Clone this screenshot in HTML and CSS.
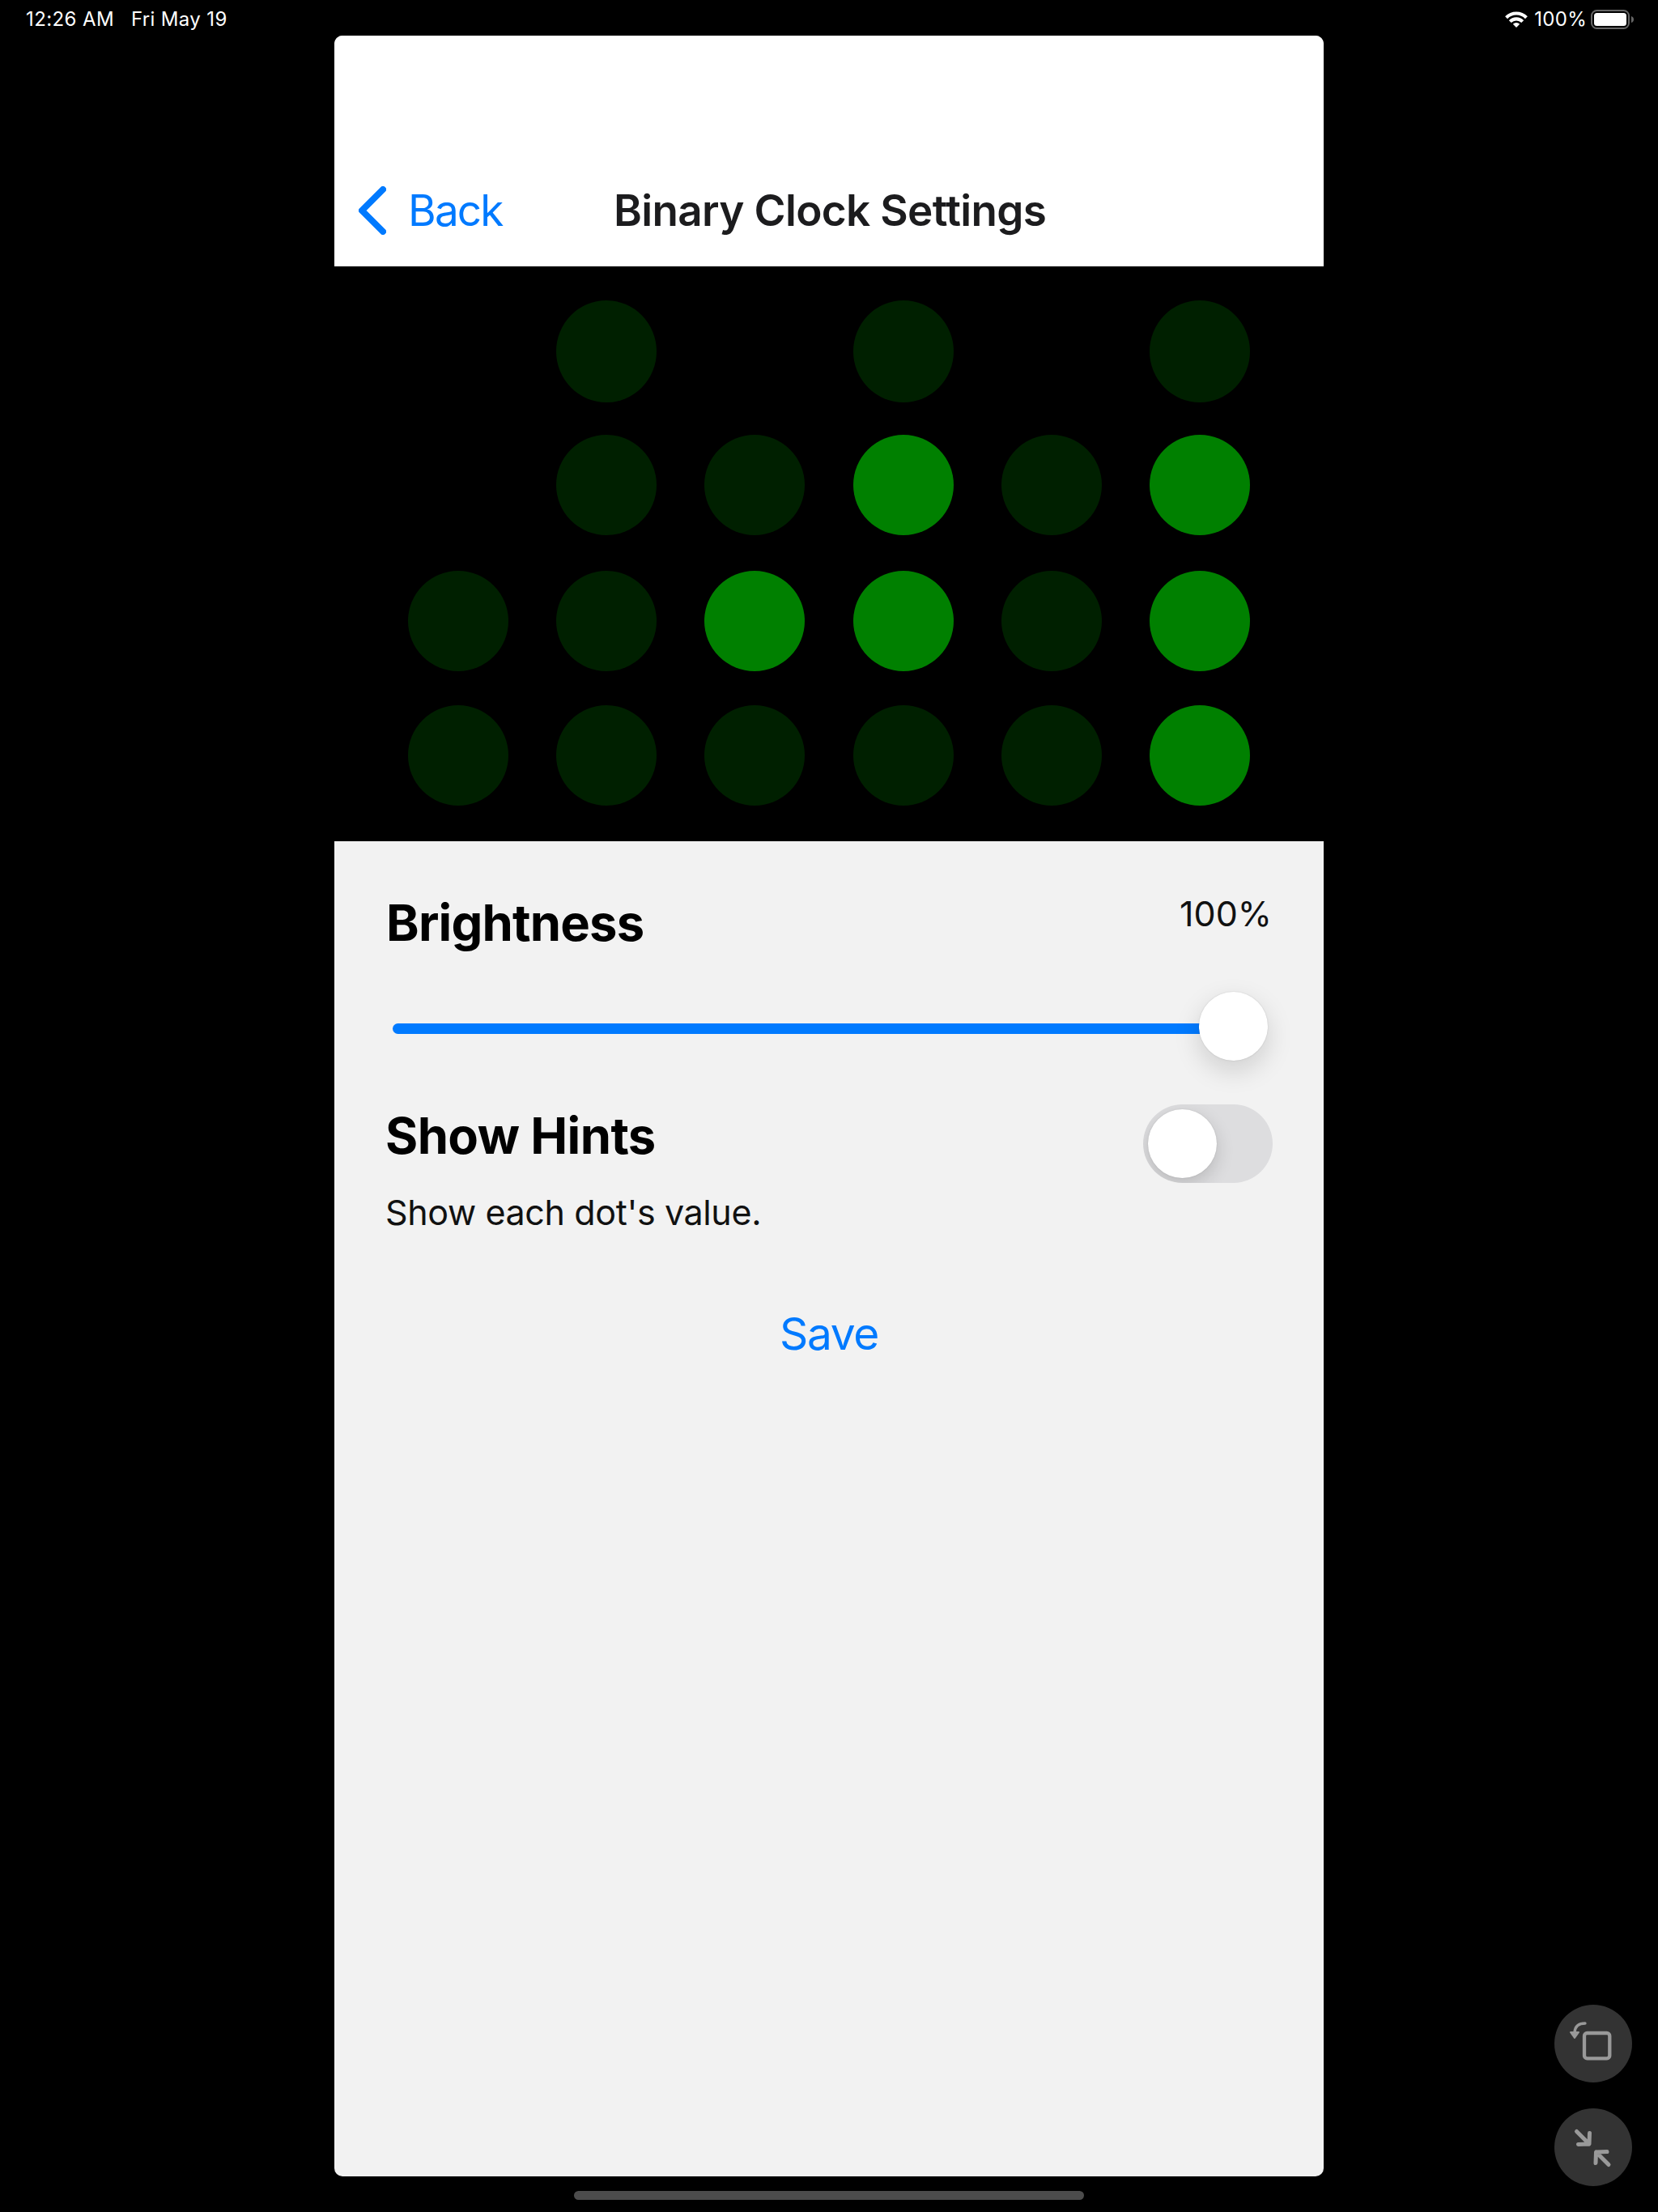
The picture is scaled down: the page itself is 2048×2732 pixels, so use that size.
FILE: index.html
```html
<!DOCTYPE html>
<html lang="en">
<head>
<meta charset="utf-8">
<title>Binary Clock Settings</title>
<link rel="stylesheet" href="styles.css">
</head>
<body>
<header class="status-bar">
  <div class="status-group"><span class="status-time">12:26 AM</span><span class="status-date">Fri May 19</span></div>
  <div class="status-group status-right">
    <svg class="wifi" viewBox="0 0 28 20" width="28" height="20"><g fill="none" stroke="#fff" stroke-width="4.1"><path d="M1.600 7.800a17.300 17.300 0 0 1 24.800 0"/><path d="M6.300 12.600a10.700 10.700 0 0 1 15.400 0"/></g><path fill="#fff" d="M14 20l-4.200-4.200a6 6 0 0 1 8.400 0z"/></svg>
    <span class="status-battery">100%</span>
    <svg class="battery" viewBox="0 0 54 24" width="54" height="24"><rect x="1" y="1" width="46" height="22" rx="6.5" fill="none" stroke="#666" stroke-width="2"/><rect x="4" y="4" width="40" height="16" rx="3.5" fill="#fff"/><path d="M50 8v8q3-1 3-4t-3-4z" fill="#666"/></svg>
  </div>
</header>
<main class="app">
  <nav class="nav-bar">
    <button class="back"><svg class="chevron" viewBox="0 0 34 60" width="34" height="60"><path d="M30 4L4 30l26 26" fill="none" stroke="#007aff" stroke-width="8" stroke-linecap="round" stroke-linejoin="round"/></svg><span class="back-label">Back</span></button>
    <h1 class="title">Binary Clock Settings</h1>
  </nav>
  <section class="clock">
    <i></i><i class="dot"></i><i></i><i class="dot"></i><i></i><i class="dot"></i>
    <i></i><i class="dot"></i><i class="dot"></i><i class="dot on"></i><i class="dot"></i><i class="dot on"></i>
    <i class="dot"></i><i class="dot"></i><i class="dot on"></i><i class="dot on"></i><i class="dot"></i><i class="dot on"></i>
    <i class="dot"></i><i class="dot"></i><i class="dot"></i><i class="dot"></i><i class="dot"></i><i class="dot on"></i>
  </section>
  <section class="settings">
    <div class="row"><h2 class="brightness">Brightness</h2><span class="value">100%</span></div>
    <div class="slider"><div class="track"></div><div class="thumb"></div></div>
    <div class="row hints"><div><h2>Show Hints</h2><p>Show each dot's value.</p></div><div class="toggle"><div class="knob"></div></div></div>
    <button class="save">Save</button>
  </section>
</main>
<footer class="home-area"><div class="home-indicator"></div></footer>
<div class="float-buttons">
  <button class="float-button"><svg viewBox="0 0 96 96" width="96" height="96"><rect x="37" y="35" width="31.300" height="31.300" rx="3.500" fill="none" stroke="#999" stroke-width="4.300"/><path d="M38 23c-8 0-12.500 3-13 11" fill="none" stroke="#999" stroke-width="3.300" stroke-linecap="round"/><path d="M20 34h10l-5 7z" fill="#999" stroke="#999" stroke-width="2" stroke-linejoin="round"/></svg></button>
  <button class="float-button"><svg viewBox="0 0 96 96" width="96" height="96"><g fill="none" stroke="#999" stroke-width="5" stroke-linecap="round" stroke-linejoin="round"><path d="M27.500 28.500L43 44M43.500 30.500L43 44L29.500 44.500"/><path d="M67 69.500L51.500 54M65 53.500L51.500 54L51 67.500"/></g></svg></button>
</div>
</body>
</html>
```
FILE: styles.css
```css
* { box-sizing: border-box; margin: 0; padding: 0; }
body {
  width: 2048px; height: 2732px; background: #000; color: #000;
  font-family: Inter, "Liberation Sans", sans-serif;
  display: flex; flex-direction: column; align-items: center; overflow: hidden;
}
button { border: 0; background: none; font: inherit; color: #007aff; }
svg { display: block; }
.status-bar { width: 100%; height: 44px; padding: 10px 29px 0 32px; display: flex; justify-content: space-between; color: #fff; font-size: 24px; line-height: 28px; font-weight: 400; }
.status-group { display: flex; }
.status-time { width: 130px; letter-spacing: .4px; }
.status-date { letter-spacing: .35px; }
.status-battery { letter-spacing: .3px; }
.wifi { margin: 4px 8px 0 0; }
.battery { margin: 2px 0 0 5px; }
.app { width: 1222px; height: 2644px; border-radius: 10px; overflow: hidden; background: #f2f2f2; display: flex; flex-direction: column; }
.nav-bar { height: 285px; padding: 184px 30px 0; background: #fff; display: grid; grid-template-columns: 315px 1fr; align-items: start; font-size: 53px; line-height: 64px; }
.back { display: flex; gap: 27px; letter-spacing: -1.8px; }
.chevron { margin-top: 2px; }
.title { font-size: 53px; font-weight: 600; color: #1c1c1e; white-space: nowrap; letter-spacing: -.65px; }
.clock { height: 710px; padding: 42px 91px 0; background: #000; display: grid; grid-template-columns: repeat(6, 124px); grid-template-rows: 126px 128px 126px 124px; column-gap: 59.2px; row-gap: 40px; }
.dot { height: 124px; border-radius: 50%; background: #002000; }
.dot:nth-child(-n+6) { height: 126px; }
.dot.on { background: #008000; }
.settings { flex: 1; padding: 63px; }
.row { display: flex; justify-content: space-between; }
h2 { font-size: 61.5px; line-height: 74px; font-weight: 700; letter-spacing: -.6px; }
.brightness { padding: 1px 0 0 1px; letter-spacing: -.8px; }
.value, p { font-size: 43px; line-height: 52px; color: #111; }
.value { padding-right: 1px; }
.slider { height: 85px; margin: 48px 6px 0 9px; display: flex; align-items: center; }
.track { flex: 1; height: 13px; margin: 5px -8px 0 0; border-radius: 6.5px 0 0 6.5px; background: #007aff; }
.thumb { width: 85px; height: 85px; border-radius: 50%; background: #fff; box-shadow: 0 12px 32px rgba(0,0,0,.15), 0 0 2px rgba(0,0,0,.15); }
.hints { margin-top: 54px; }
.hints h2 { margin-top: 2px; }
.hints p { margin-top: 31px; letter-spacing: -.37px; }
.toggle { width: 160px; height: 97px; border-radius: 49px; padding: 6px; background: #dddddf; overflow: hidden; }
.knob { width: 85px; height: 85px; border-radius: 50%; background: #fff; box-shadow: 0 8px 22px rgba(0,0,0,.16), 0 0 2px rgba(0,0,0,.12); }
.save { display: block; margin: 92px auto 0; font-size: 55px; line-height: 64px; letter-spacing: -1.3px; }
.home-area { height: 44px; padding-top: 18px; }
.home-indicator { width: 630px; height: 11px; border-radius: 5.5px; background: #4c4c4c; }
.float-buttons { position: absolute; right: 32px; bottom: 32px; display: grid; gap: 32px; }
.float-button { width: 96px; height: 96px; border-radius: 50%; background: #333; }
```
